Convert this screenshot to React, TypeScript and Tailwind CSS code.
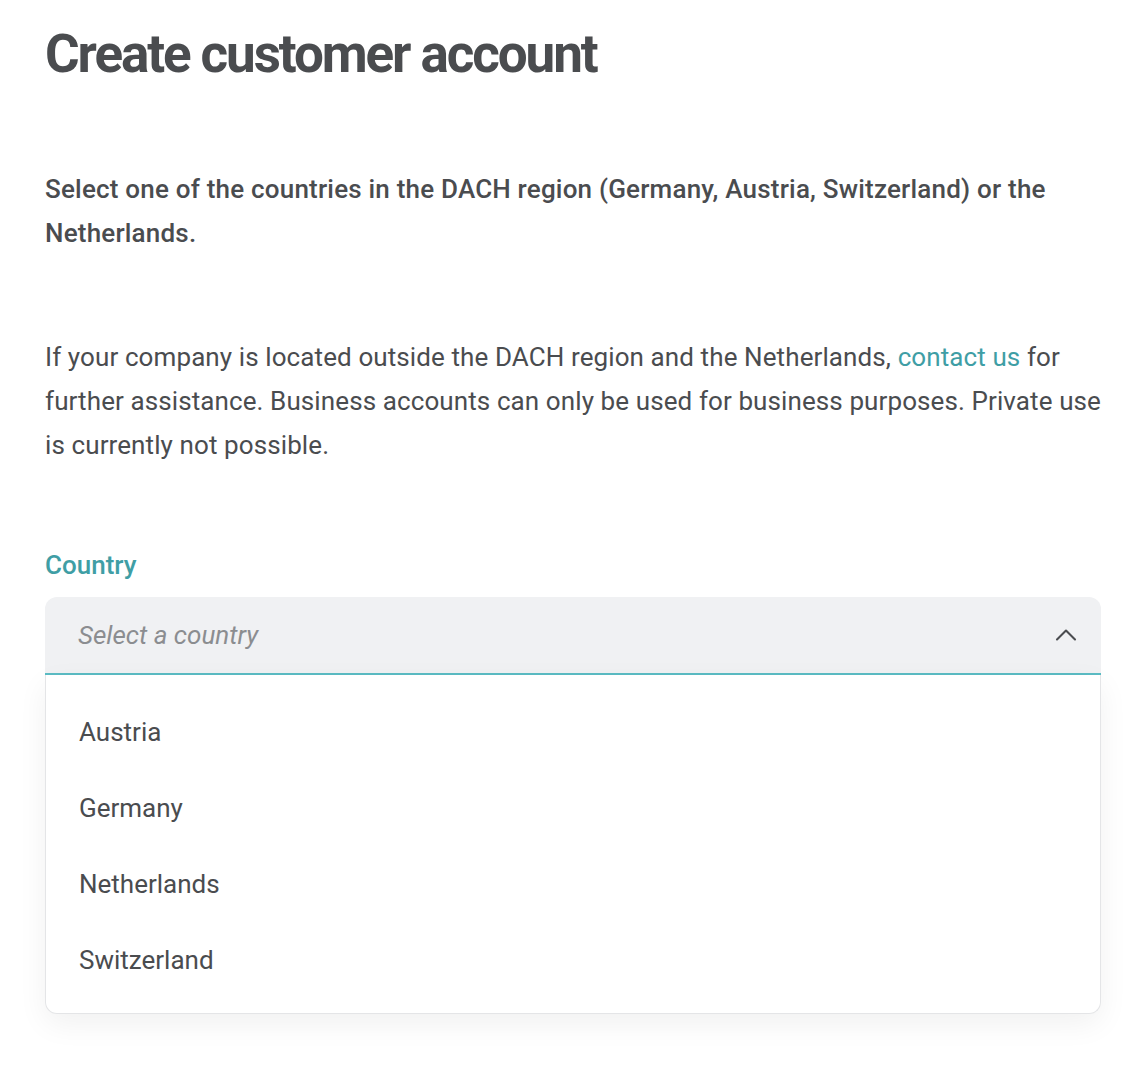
import { ChevronUp } from "lucide-react";

const countries = ["Austria", "Germany", "Netherlands", "Switzerland"];

export default function App() {
    return (
        <div className="min-h-screen bg-white font-['Roboto',sans-serif] text-[#4a4c4f]">
            <div className="pl-[45px] pr-[12px] pt-[22px]">

                {/* Heading */}
                <h1 className="text-[53px] leading-[64px] font-bold tracking-[-2.1px] text-[#4a4c4f]">
                    Create customer account
                </h1>

                <p className="mt-[81px] text-[26px] leading-[44px] font-medium tracking-[0.2px]">
                    Select one of the countries in the DACH region (Germany, Austria, Switzerland) or the Netherlands.
                </p>

                <p className="mt-[80px] text-[26px] leading-[44px] tracking-[0.1px]">
                    If your company is located outside the DACH region and the Netherlands,{" "}
                    <a href="#" className="text-[#3f9ea5]">contact us</a> for further assistance. Business accounts can only be used for business purposes. Private use is currently not possible.
                </p>

                {/* Country select */}
                <label className="block mt-[81px] text-[26px] leading-[34px] font-medium text-[#3f9ea5]">
                    Country
                </label>

                <div className="mt-[15px] mr-[11px]">
                    <button className="w-full h-[78px] flex items-center justify-between pl-[33px] pr-[17px] bg-[#f0f1f3] rounded-t-[12px] border-b-2 border-[#5bbcc4]">
                        <span className="text-[26px] italic text-[#8b8d90]">Select a country</span>
                        <ChevronUp size={36} strokeWidth={1.4} className="text-[#4a4c4f]" />
                    </button>

                    <ul className="bg-white border border-t-0 border-[#e4e5e7] rounded-b-[12px] shadow-[0_10px_30px_rgba(0,0,0,0.06)] pt-[19px] pb-[15px]">
                        {countries.map((c) => (
                            <li key={c} className="pl-[33px] h-[76px] flex items-center text-[26px]">
                                {c}
                            </li>
                        ))}
                    </ul>
                </div>
            </div>
        </div>
    );
}
